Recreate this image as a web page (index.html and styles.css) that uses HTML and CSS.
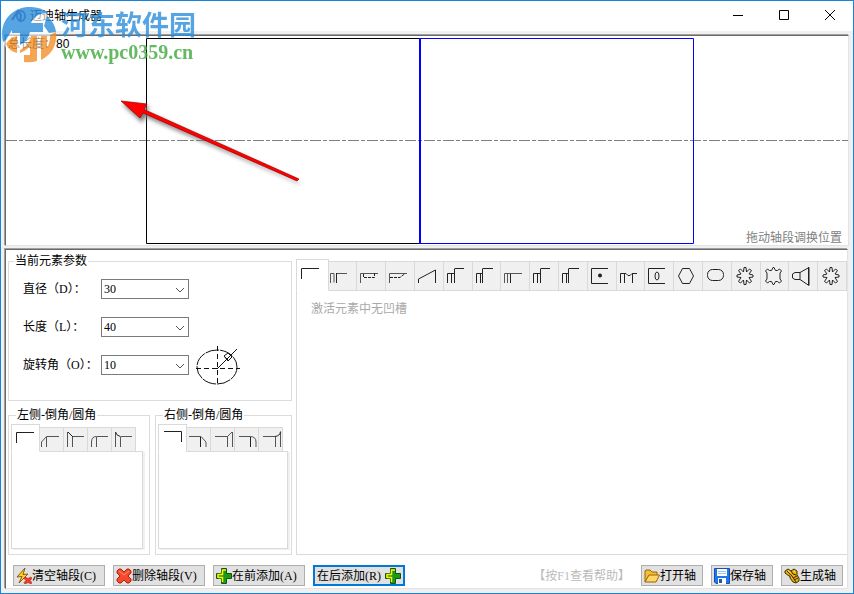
FILE: index.html
```html
<!DOCTYPE html>
<html lang="zh-CN">
<head>
<meta charset="utf-8">
<title>迈迪轴生成器</title>
<link rel="stylesheet" href="styles.css">
</head>
<body>
<svg class="defs" aria-hidden="true">
  <symbol id="gear" viewBox="0 0 26 28"><path d="M21 13v2l-4 .5 2.500 4-2 1.500-3-3-.5 4.500h-2l-.5-4.500-3 3-2-1.500 2.500-4-4-.5v-2l4-1-2.500-3.500 2-1.500 3 3 .5-4.500h2l.5 4.500 3-3 2 1.500-2.500 3.500z"/></symbol>
  <symbol id="step-a" viewBox="0 0 26 28"><path class="dim" d="M3.500 21V11.500H10M7.500 12v9M10.500 6.500H20"/><path d="M10.500 21V7"/></symbol>
  <symbol id="step-b" viewBox="0 0 26 28"><path class="dim" d="M3.500 21V11.500H9M7.500 12v9M9.500 6.500H20"/><path d="M9.500 21V7"/></symbol>
  <symbol id="plus" viewBox="0 0 16 16"><path d="M5.500.500h5v5h5v5h-5v5h-5v-5h-5v-5h5z" fill="#1a9c12" stroke="#14521a"/><path d="M6.500 14V9.500H2M2 10V6.500h4.500V2H10" fill="none" stroke="#fff200" stroke-width="1.500"/></symbol>
</svg>
<div class="window">
  <header class="titlebar">
    <svg class="app-icon" viewBox="0 0 16 16"><path d="M1 12l6-9 3 4-1 7" fill="none" stroke="#7a3a55" stroke-width="2"/><ellipse cx="10" cy="8" rx="4" ry="5" fill="none" stroke="#5b5fa0" stroke-width="2"/></svg>
    <h1>迈迪轴生成器</h1>
    <div class="win-buttons">
      <button type="button" aria-label="最小化"><svg viewBox="0 0 12 12"><path d="M1 5.500h10"/></svg></button>
      <button type="button" aria-label="最大化"><svg viewBox="0 0 12 12"><path d="M1.500.500h9v9h-9z"/></svg></button>
      <button type="button" aria-label="关闭"><svg viewBox="0 0 12 12"><path d="M1 0l10 10M11 0L1 10"/></svg></button>
    </div>
  </header>

  <section class="panel canvas">
    <svg class="shaft" viewBox="0 0 842 209">
      <path d="M0 104.500H842" stroke="#808080" stroke-dasharray="11 2 4 2" fill="none"/>
      <path d="M414 2.500H140.500V207.500H414" stroke="#000" fill="none"/>
      <path d="M414 2.500H687.500V207.500H414" stroke="#00f" fill="none"/>
      <path d="M414 2V208" stroke="#00f" stroke-width="2"/>
    </svg>
    <p class="total">总长度：<span class="num">80</span></p>
    <p class="drag-hint">拖动轴段调换位置</p>
    <svg class="arrow" viewBox="0 0 190 92">
      <g class="arrow-shadow" transform="translate(2 3)"><path d="M3 3L29 6 25 11 179 82 25 15 22 21z"/></g>
      <path d="M3 3L29 6 26 11.500 181 81 179 83 25 15 22 20z" fill="#f00" stroke="#9c0000" stroke-width=".7"/>
    </svg>
  </section>

  <main class="panel work">
    <div class="columns">
      <div class="left">
        <fieldset class="params">
          <legend>当前元素参数</legend>
          <div class="field">
            <label for="dia">直径（D）：</label>
            <span class="combo"><select id="dia"><option>30</option></select><svg viewBox="0 0 10 6"><path d="M1 1l4 4 4-4"/></svg></span>
          </div>
          <div class="field">
            <label for="len">长度（L）：</label>
            <span class="combo"><select id="len"><option>40</option></select><svg viewBox="0 0 10 6"><path d="M1 1l4 4 4-4"/></svg></span>
          </div>
          <div class="field">
            <label for="rot">旋转角（O）：</label>
            <span class="combo"><select id="rot"><option>10</option></select><svg viewBox="0 0 10 6"><path d="M1 1l4 4 4-4"/></svg></span>
            <svg class="dial" viewBox="0 0 44 42"><ellipse cx="21" cy="23" rx="20" ry="17" stroke-dasharray="14 1"/><path d="M0 24.500h44" stroke-dasharray="5 3"/><path d="M21.500 2v40" stroke-dasharray="5 3"/><path d="M21 25L41 5M28 12l4-3 4 4-4 4zM29 13l4 4"/></svg>
          </div>
        </fieldset>
        <div class="ends">
          <fieldset class="end end-left">
            <legend>左侧-倒角/圆角</legend>
            <div class="tabs small">
              <button type="button" class="tab on" aria-label="无"><svg viewBox="0 0 24 24"><path d="M4.500 17V6.500H22"/></svg></button>
              <button type="button" class="tab" aria-label="倒角"><svg viewBox="0 0 24 24"><path class="dim" d="M1.500 19v-5l5-5.500H19M6.500 9v10"/></svg></button>
              <button type="button" class="tab" aria-label="外倒角"><svg viewBox="0 0 24 24"><path class="dim" d="M3.500 19V4M8.500 19V9M9 8.500H20"/><path d="M4 4l5 5"/></svg></button>
              <button type="button" class="tab" aria-label="圆角"><svg viewBox="0 0 24 24"><path class="dim" d="M3.500 19v-5q0-5.500 5-5.500H20M8.500 9v10"/></svg></button>
              <button type="button" class="tab" aria-label="外圆角"><svg viewBox="0 0 24 24"><path class="dim" d="M3.500 19V4M8.500 19V9M9 8.500H20"/><path d="M3.500 4q1 4 5 4.500"/></svg></button>
            </div>
            <div class="page"></div>
          </fieldset>
          <fieldset class="end">
            <legend>右侧-倒角/圆角</legend>
            <div class="tabs small">
              <button type="button" class="tab on" aria-label="无"><svg viewBox="0 0 24 24"><path d="M5 5.500H22.500V16"/></svg></button>
              <button type="button" class="tab" aria-label="倒角"><svg viewBox="0 0 24 24"><path class="dim" d="M2 8.500H14l5 5.500v5"/><path d="M13.500 9v10"/></svg></button>
              <button type="button" class="tab" aria-label="外倒角"><svg viewBox="0 0 24 24"><path class="dim" d="M4 8.500h12M16.500 9v10M21.500 4v15M16 9l5-5"/></svg></button>
              <button type="button" class="tab" aria-label="圆角"><svg viewBox="0 0 24 24"><path class="dim" d="M4 8.500H15q6 0 6 5.500v5"/><path d="M15.500 9v10"/></svg></button>
              <button type="button" class="tab" aria-label="外圆角"><svg viewBox="0 0 24 24"><path class="dim" d="M4 8.500h12M16.500 9v10M21.500 4v15"/><path d="M16 8.500q5-.5 5.500-5"/></svg></button>
            </div>
            <div class="page"></div>
          </fieldset>
        </div>
      </div>

      <div class="grooves">
        <div class="tabs">
          <button type="button" class="tab on" aria-label="无凹槽"><svg viewBox="0 0 26 28"><path d="M4.500 18V7.500H22"/></svg></button>
          <button type="button" class="tab" aria-label="环槽"><svg viewBox="0 0 26 28"><path class="dim" d="M1.500 21V11.500H5v9M8 11.500H18"/><path d="M7.500 21V11"/></svg></button>
          <button type="button" class="tab" aria-label="键槽一"><svg viewBox="0 0 26 28"><path class="dim" d="M3.500 21V11.500H21"/><path d="M6.500 12v3.500h11V11" stroke-dasharray="3 1"/></svg></button>
          <button type="button" class="tab" aria-label="键槽二"><svg viewBox="0 0 26 28"><path class="dim" d="M3.500 21V11.500H21"/><path d="M4 15.500h10l5-4" stroke-dasharray="3 1"/></svg></button>
          <button type="button" class="tab" aria-label="锥面"><svg viewBox="0 0 26 28"><path d="M3.500 21v-4l17-9v13"/></svg></button>
          <button type="button" class="tab" aria-label="台阶一"><svg><use href="#step-a"/></svg></button>
          <button type="button" class="tab" aria-label="台阶二"><svg><use href="#step-b"/></svg></button>
          <button type="button" class="tab" aria-label="退刀槽"><svg viewBox="0 0 26 28"><path class="dim" d="M3.500 21V11.500H21M6.500 12v9"/><path d="M9.500 21V12"/></svg></button>
          <button type="button" class="tab" aria-label="台阶三"><svg><use href="#step-a"/></svg></button>
          <button type="button" class="tab" aria-label="台阶四"><svg><use href="#step-b"/></svg></button>
          <button type="button" class="tab" aria-label="圆孔"><svg viewBox="0 0 26 28"><path d="M20 6.500H3.500v15H20"/><circle class="heavy" cx="12" cy="13.500" r="1"/></svg></button>
          <button type="button" class="tab" aria-label="中心槽"><svg viewBox="0 0 26 28"><path d="M3.500 21V11.500H9l2 2h2l2-2h5M7.500 12v9M15.500 12v9"/></svg></button>
          <button type="button" class="tab" aria-label="长孔"><svg viewBox="0 0 26 28"><path d="M20 6.500H3.500v15H20"/><ellipse cx="12" cy="14" rx="2" ry="4"/></svg></button>
          <button type="button" class="tab" aria-label="六角"><svg viewBox="0 0 26 28"><path d="M8.500 6.500h7l4 7.500-4 7.500h-7L4.500 14z"/></svg></button>
          <button type="button" class="tab" aria-label="扁圆"><svg viewBox="0 0 26 28"><rect x="4.500" y="7.500" width="16" height="11" rx="5"/></svg></button>
          <button type="button" class="tab" aria-label="花键"><svg><use href="#gear"/></svg></button>
          <button type="button" class="tab" aria-label="矩形花键"><svg viewBox="0 0 26 28"><path d="M10.500 8.500l1.500-3h1l1.500 3h2l2-1.500 2 2-1.500 2V17l1.500 2-2 2-2-1.500h-2L13 22.500h-1l-1.500-3h-2L6.500 21l-2-2L6 17v-6L4.500 9l2-2 2 1.500z"/></svg></button>
          <button type="button" class="tab" aria-label="锥孔"><svg viewBox="0 0 26 28"><path d="M3.500 12L6 10.500h5v7H6L3.500 16zM11 10.500l9-5v18l-9-6M19.500 5v18"/></svg></button>
          <button type="button" class="tab" aria-label="渐开线花键"><svg><use href="#gear"/></svg></button>
        </div>
        <div class="page"><p>激活元素中无凹槽</p></div>
      </div>
    </div>

    <footer class="actions">
      <button type="button" class="act wide"><svg viewBox="0 0 16 16"><path d="M9 0L1 9l5-.5L3 15l9-9-5 .5z" fill="#ffd21c" stroke="#8c5a10"/><path d="M9 9l3 1.500L15 9l1 1.500-2 2 2 2-1 1.500-3-1.500L9 16l-1-1.500 2-2-2-2z" fill="#f03c28" stroke="#a81c10" stroke-width=".6"/></svg>清空轴段(C)</button>
      <button type="button" class="act wide"><svg viewBox="0 0 16 16"><path d="M1 3l2-2h2l3 3 3-3h2l2 2v2l-3 3 3 3v2l-2 2h-2l-3-3-3 3H3l-2-2v-2l3-3-3-3z" fill="#f5482c" stroke="#b3200c"/><path d="M3 3l5 4 5-4" fill="none" stroke="#ff9270"/></svg>删除轴段(V)</button>
      <button type="button" class="act wide"><svg><use href="#plus"/></svg>在前添加(A)</button>
      <button type="button" class="act wide focus">在后添加(R)<svg><use href="#plus"/></svg></button>
      <span class="help">【按F1查看帮助】</span>
      <button type="button" class="act"><svg viewBox="0 0 16 16"><path d="M1 14V3l1-1h4l2 2h5v3" fill="#f3bd36" stroke="#9a6208"/><path d="M1 14L5 7h10.500L12 14z" fill="#ffd765" stroke="#9a6208"/></svg>打开轴</button>
      <button type="button" class="act"><svg viewBox="0 0 16 16"><path d="M.5.500h15v15H2L.5 14z" fill="#2277e8" stroke="#1550b8"/><path d="M3 1h10v7H3zM4 10h8v6H4z" fill="#fff"/><path d="M4 3.500h8M4 5.500h8" stroke="#9cc4f5"/><path d="M5 11h3v4H5z" fill="#1d58b8"/></svg>保存轴</button>
      <button type="button" class="act"><svg viewBox="0 0 16 16"><path d="M1 3l3-2 3 2 3-2 3 2v4l2 3v3l-3 2-3-1-3-4V8L5 8 1 5z" fill="#e8b010" stroke="#3c2c04"/><path d="M3 3l5 5 4 6M7 3l2 3 3 1M9 10l4-2M10 12l4-2" fill="none" stroke="#3c2c04"/><path d="M4 2.500l3 2.500M10 3l1.500 1.500" stroke="#ffe65c" fill="none"/></svg>生成轴</button>
    </footer>
  </main>

  <div class="watermark">
    <svg class="mark" viewBox="0 0 58 58">
      <circle cx="28" cy="28" r="27" fill="#fff" opacity=".75"/>
      <path d="M2 36C-3 14 13 0 30 1q10 0 17 6-10 0-15 6l-2 4h12v9H29q-2 9-10 13v-12h-8V24L5 34z" fill="#2c8fdc"/>
      <path d="M46 10q8 7 9 16l-7 1-5-7z" fill="#2c8fdc"/>
      <path d="M5 38q4-7 11-8v17q-8-2-11-9zM19 44q9-4 11-14h6v25q-6 2-13 1v-7h6v-9q-3 4-10 7zM49 29l6-3q2 19-15 28V30h6v12q3-5 3-13z" fill="#f2912a"/>
    </svg>
    <div class="brand"><span class="cn">河东软件园</span><span class="url">www.pc0359.cn</span></div>
  </div>
</div>
</body>
</html>
```
FILE: styles.css
```css
* { box-sizing: border-box; }
body, h1, p, fieldset { margin: 0; }
body, button, select {
  font: 12px/14px "Liberation Serif", "Noto Sans CJK SC", sans-serif;
  color: #000;
}
button { cursor: default; }
.defs { position: absolute; width: 0; height: 0; }

.window {
  position: relative;
  display: flex;
  flex-direction: column;
  min-height: 100vh;
  padding: 0 4px 4px 3px;
  border: 1px solid #1883d7;
  background: #f0f0f0;
}
.titlebar {
  display: flex;
  align-items: center;
  height: 30px;
  margin: 0 -4px 3px -3px;
  padding-left: 10px;
  gap: 3px;
  background: #fff;
}
.app-icon { width: 16px; height: 16px; }
h1 { font-size: 12px; font-weight: 400; }
.win-buttons { display: flex; margin-left: auto; }
.win-buttons button {
  display: grid;
  place-items: center;
  width: 46px;
  height: 28px;
  padding: 0;
  border: 0;
  background: none;
}
.win-buttons svg { width: 12px; height: 12px; fill: none; stroke: #000; }

.panel {
  margin: 1px 0 0 1px;
  border: 1px solid;
  border-color: #696969 #e3e3e3 #e3e3e3 #696969;
  box-shadow: -1px -1px 0 #a0a0a0;
  background: #fff;
}
.canvas { position: relative; margin-bottom: 2px; }
.shaft { display: block; width: 100%; height: auto; }
.total { position: absolute; left: 2px; top: 1px; }
.num { font-family: "Liberation Sans", sans-serif; }
.drag-hint { position: absolute; right: 6px; bottom: 0; color: #808080; }
.arrow { position: absolute; left: 112px; top: 62px; width: 190px; overflow: visible; }
.arrow-shadow { fill: #777; stroke: #777; filter: blur(2px); }

.work { flex: 1; display: flex; flex-direction: column; margin-right: 1px; padding: 4px 0 2px 2px; }
.columns { flex: 1; display: flex; gap: 4px; }
.left { display: flex; flex-direction: column; gap: 7px; width: 284px; flex: none; }
fieldset { min-width: 0; padding: 0; border: 1px solid #dcdcdc; }
legend { margin-left: 5px; padding: 0 1px; height: 14px; }
.params { height: 147px; padding-top: 11px; }
.field { display: flex; align-items: center; height: 20px; margin: 0 0 18px 14px; }
.field label { width: 78px; white-space: nowrap; }
.combo { position: relative; width: 88px; height: 20px; }
.combo select {
  display: block;
  width: 100%;
  height: 20px;
  padding: 0 2px;
  border: 1px solid #7a7a7a;
  border-radius: 0;
  background: #fff;
  appearance: none;
}
.combo svg { position: absolute; right: 4px; top: 8px; width: 10px; height: 6px; fill: none; stroke: #555; pointer-events: none; }
.dial { width: 44px; height: 42px; margin-left: 7px; fill: none; stroke: #111; }

.ends { flex: 1; display: flex; gap: 5px; }
.end { flex: 1; display: flex; flex-direction: column; padding: 2px 3px 5px 2px; }
.end-left { flex: none; width: 142px; padding-right: 6px; }

.tabs { display: flex; align-items: flex-end; }
.tab {
  flex: 29 0 0;
  display: grid;
  place-items: center start;
  height: 30px;
  min-width: 0;
  padding: 0;
  border: 1px solid #d9d9d9;
  border-left: 0;
  background: #f0f0f0;
}
.tab.on {
  flex-grow: 32;
  height: 32px;
  border-left: 1px solid #d9d9d9;
  border-bottom-color: #fff;
  background: #fff;
}
.tab svg { width: 26px; height: 28px; fill: none; stroke: #222; }
.tab .dim { stroke: #555; }
.tab .heavy { stroke-width: 2; }
.small { position: relative; z-index: 1; margin-bottom: -1px; }
.small .tab { flex: none; width: 24px; height: 25px; }
.small .tab.on { width: 29px; height: 28px; }
.small .tab svg { width: 24px; height: 24px; }
.page { flex: 1; border: 1px solid #d9d9d9; background: #fff; }
.small + .page { box-shadow: 2px 1px 0 #f0f0f0; }
.grooves { flex: 1; min-width: 0; display: flex; flex-direction: column; padding-top: 5px; }
.grooves .page { border-top: 0; border-right: 0; padding: 11px 14px; color: #a9a9a9; }

.actions { display: flex; align-items: center; gap: 8px; padding: 10px 4px 0 5px; }
.act {
  display: flex;
  align-items: center;
  justify-content: flex-start;
  width: 62px;
  height: 21px;
  padding: 0 2px;
  border: 1px solid #adadad;
  background: #e1e1e1;
  white-space: nowrap;
}
.act svg { width: 16px; height: 16px; flex: none; }
.act.wide { width: 92px; }
.act.focus { border: 2px solid #0078d7; justify-content: space-between; }
.help { margin-left: auto; margin-right: 3px; color: #bbb; }

.watermark { position: absolute; left: 0; top: 5px; display: flex; gap: 2px; opacity: .8; pointer-events: none; }
.mark { width: 58px; height: 58px; }
.brand { display: flex; flex-direction: column; padding-top: 2px; }
.cn { font: 700 27px/32px "Noto Sans CJK SC", sans-serif; color: #2c8fdc; }
.url { font: 700 20px/24px "Liberation Serif", serif; color: #3fa83a; }
```
